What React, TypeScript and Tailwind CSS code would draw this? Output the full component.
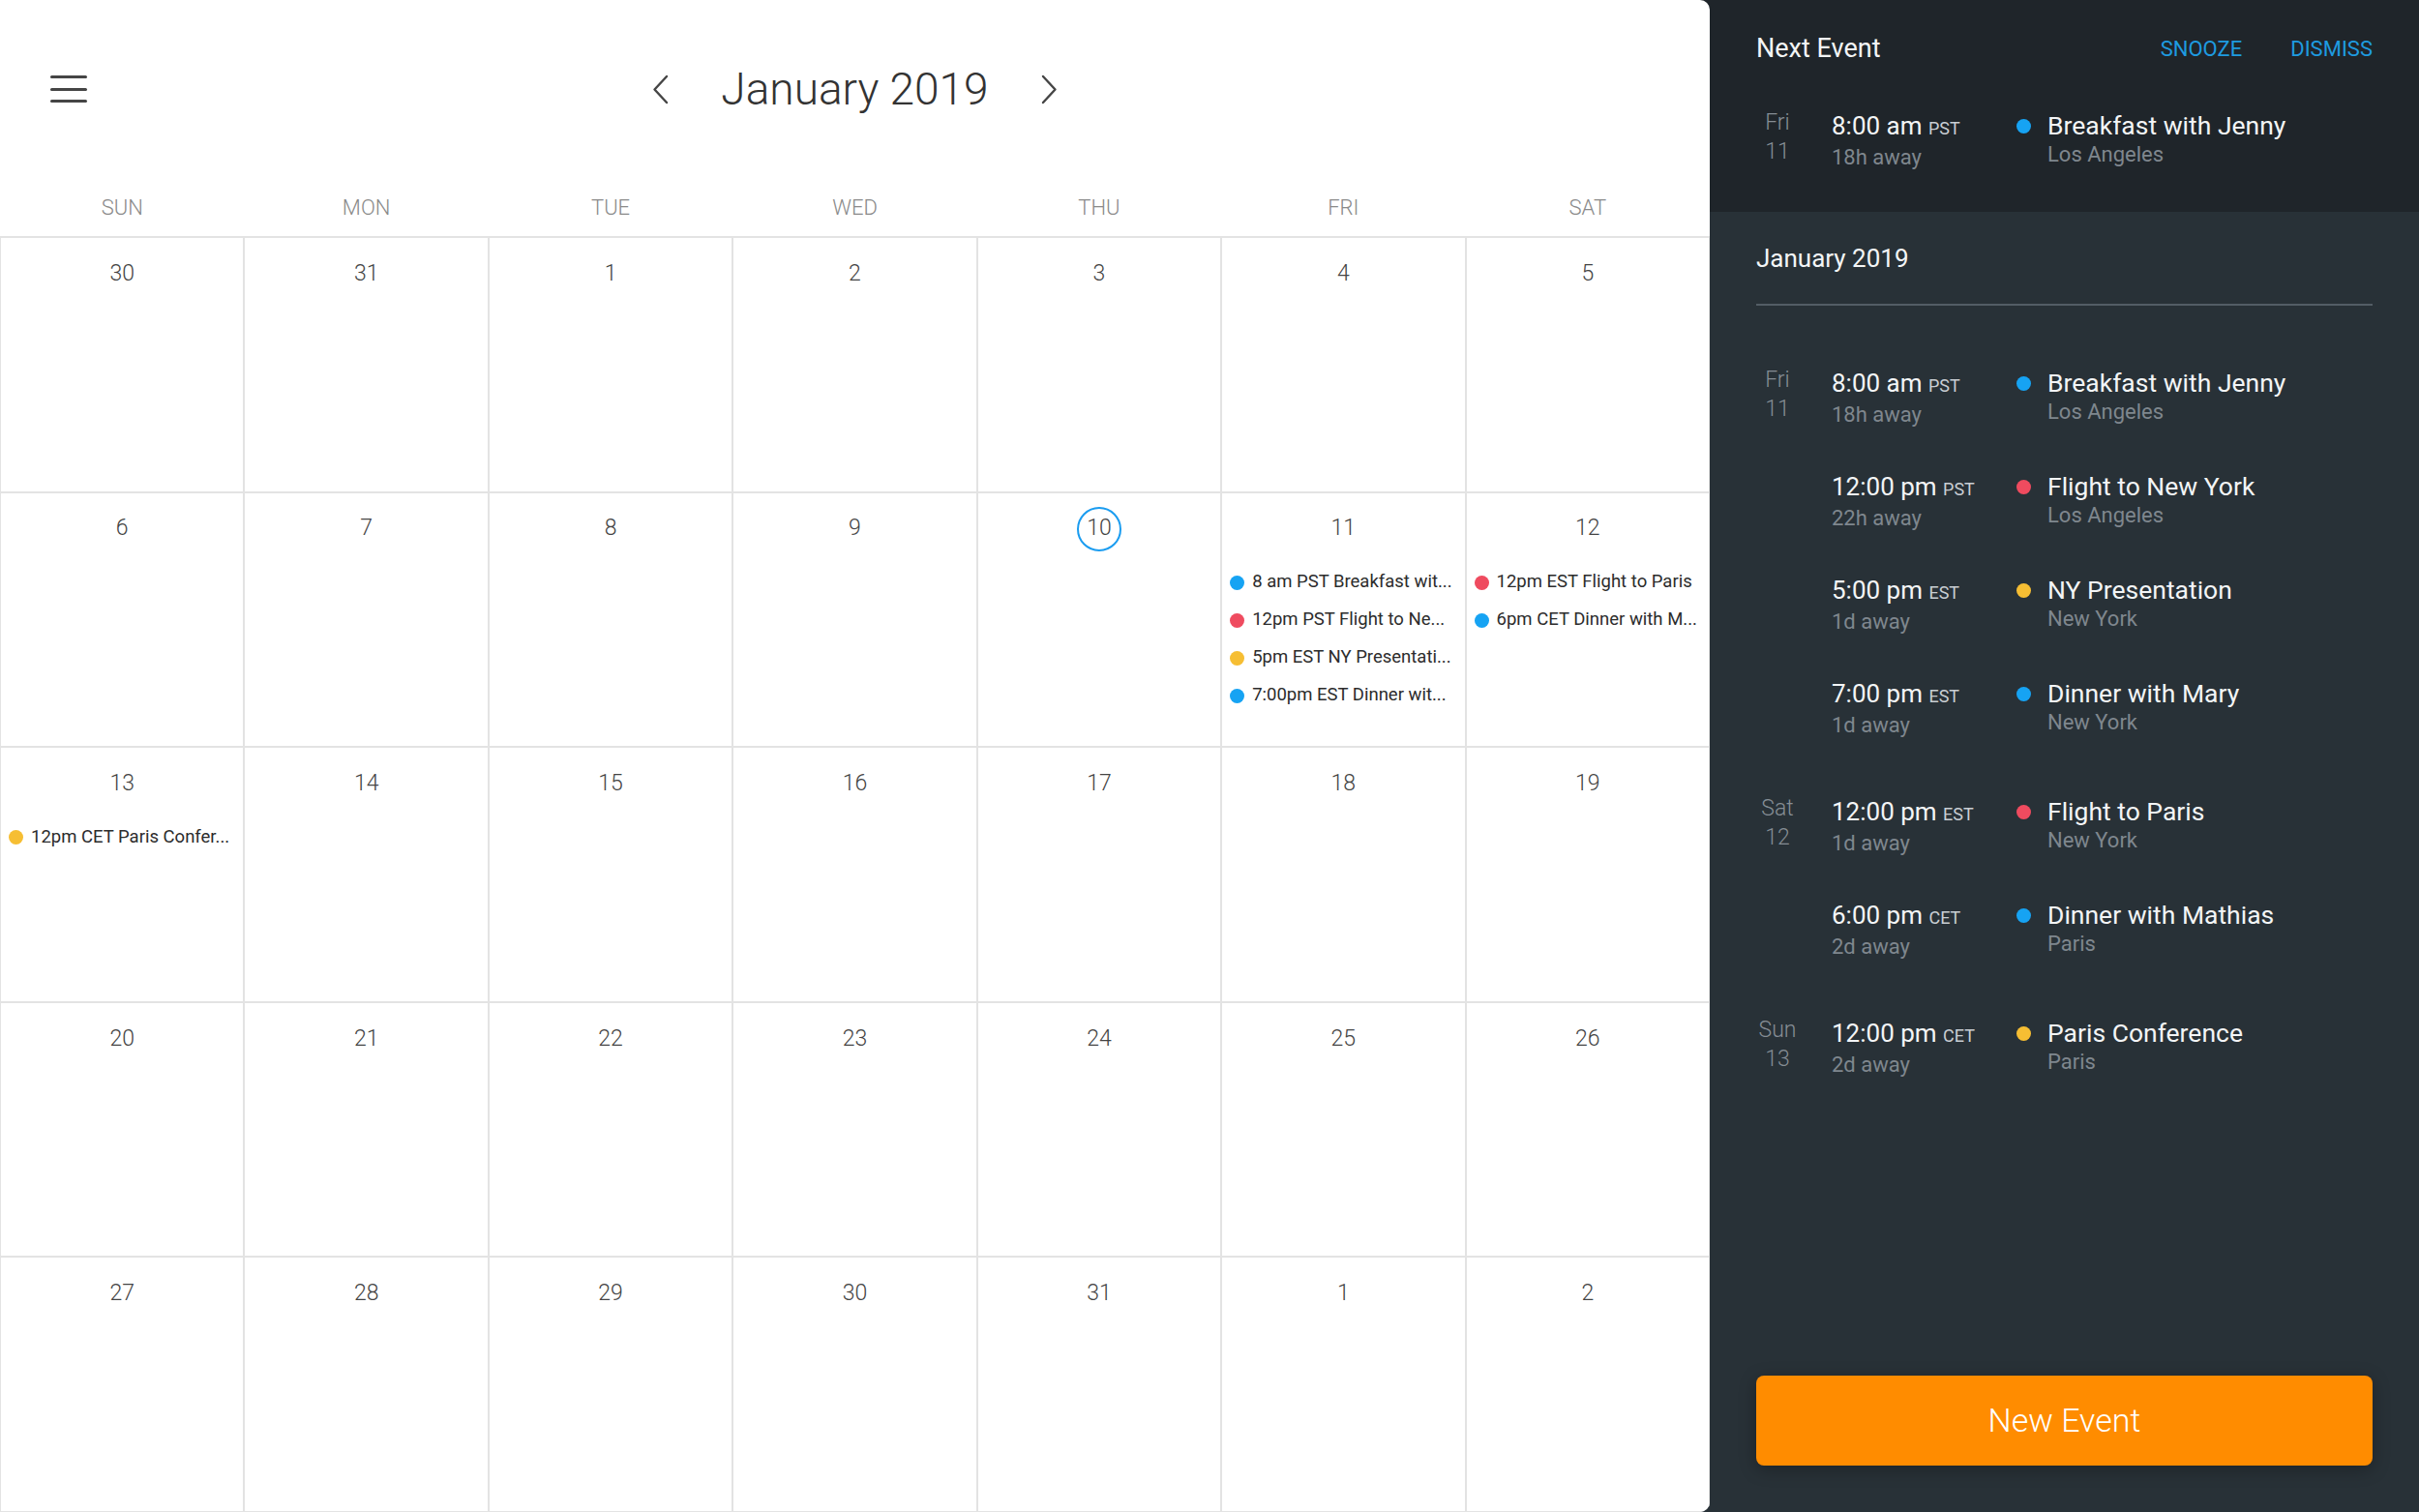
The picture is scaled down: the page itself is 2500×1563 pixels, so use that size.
import React from "react";

type Tone = "blue" | "red" | "yellow";

const dotClass: Record<Tone, string> = {
  blue: "bg-[#16a3f3]",
  red: "bg-[#ef4b5f]",
  yellow: "bg-[#f6be33]",
};

type CellEvent = { tone: Tone; text: string };
type Cell = { day: number; today?: boolean; events?: CellEvent[] };

const weekdays = ["SUN", "MON", "TUE", "WED", "THU", "FRI", "SAT"];

const cells: Cell[] = [
  { day: 30 }, { day: 31 }, { day: 1 }, { day: 2 }, { day: 3 }, { day: 4 }, { day: 5 },
  { day: 6 }, { day: 7 }, { day: 8 }, { day: 9 }, { day: 10, today: true },
  {
    day: 11,
    events: [
      { tone: "blue", text: "8 am PST Breakfast wit..." },
      { tone: "red", text: "12pm PST Flight to Ne..." },
      { tone: "yellow", text: "5pm EST NY Presentati..." },
      { tone: "blue", text: "7:00pm EST Dinner wit..." },
    ],
  },
  {
    day: 12,
    events: [
      { tone: "red", text: "12pm EST Flight to Paris" },
      { tone: "blue", text: "6pm CET Dinner with M..." },
    ],
  },
  { day: 13, events: [{ tone: "yellow", text: "12pm CET Paris Confer..." }] },
  { day: 14 }, { day: 15 }, { day: 16 }, { day: 17 }, { day: 18 }, { day: 19 },
  { day: 20 }, { day: 21 }, { day: 22 }, { day: 23 }, { day: 24 }, { day: 25 }, { day: 26 },
  { day: 27 }, { day: 28 }, { day: 29 }, { day: 30 }, { day: 31 }, { day: 1 }, { day: 2 },
];

type AgendaEvent = {
  time: string;
  tz: string;
  away: string;
  tone: Tone;
  title: string;
  place: string;
};

const agenda: { day: string; date: string; events: AgendaEvent[] }[] = [
  {
    day: "Fri",
    date: "11",
    events: [
      { time: "8:00 am", tz: "PST", away: "18h away", tone: "blue", title: "Breakfast with Jenny", place: "Los Angeles" },
      { time: "12:00 pm", tz: "PST", away: "22h away", tone: "red", title: "Flight to New York", place: "Los Angeles" },
      { time: "5:00 pm", tz: "EST", away: "1d away", tone: "yellow", title: "NY Presentation", place: "New York" },
      { time: "7:00 pm", tz: "EST", away: "1d away", tone: "blue", title: "Dinner with Mary", place: "New York" },
    ],
  },
  {
    day: "Sat",
    date: "12",
    events: [
      { time: "12:00 pm", tz: "EST", away: "1d away", tone: "red", title: "Flight to Paris", place: "New York" },
      { time: "6:00 pm", tz: "CET", away: "2d away", tone: "blue", title: "Dinner with Mathias", place: "Paris" },
    ],
  },
  {
    day: "Sun",
    date: "13",
    events: [
      { time: "12:00 pm", tz: "CET", away: "2d away", tone: "yellow", title: "Paris Conference", place: "Paris" },
    ],
  },
];

function Chevron({ dir }: { dir: "left" | "right" }) {
  return (
    <svg width="17" height="31" viewBox="0 0 17 31" fill="none">
      <polyline
        points={dir === "left" ? "15,2 2.5,15.5 15,29" : "2,2 14.5,15.5 2,29"}
        stroke="#454545"
        strokeWidth="2.4"
        strokeLinecap="round"
        strokeLinejoin="round"
      />
    </svg>
  );
}

function AgendaRow({ event, day, date }: { event: AgendaEvent; day?: string; date?: string }) {
  return (
    <div className="flex h-[58px]">
      <div className="-mt-[2px] w-[44px] text-center text-[23px] font-light leading-[30px] text-[#858d94]">
        {day ? (
          <>
            <div>{day}</div>
            <div>{date}</div>
          </>
        ) : null}
      </div>
      <div className="ml-[34px] w-[191px]">
        <div className="text-[26px] leading-[32px] text-[#f3f5f6]">
          {event.time} <span className="text-[18px] text-[#c9ced3]">{event.tz}</span>
        </div>
        <div className="text-[22px] leading-[27px] text-[#7f878e]">{event.away}</div>
      </div>
      <span className={`mt-[9px] h-[15px] w-[15px] shrink-0 rounded-full ${dotClass[event.tone]}`} />
      <div className="ml-[17px]">
        <div className="text-[26.5px] leading-[32px] text-[#f3f5f6]">{event.title}</div>
        <div className="text-[22px] leading-[27px] text-[#7f878e]">{event.place}</div>
      </div>
    </div>
  );
}

export default function App() {
  return (
    <div className="flex h-[1563px] w-[2500px] overflow-hidden bg-[#283137] font-[Roboto,'Noto_Sans',sans-serif]">
      <section className="relative z-10 flex w-[1767px] shrink-0 flex-col overflow-hidden rounded-r-[10px] bg-white">
        <header className="grid h-[184px] grid-cols-[1fr_auto_1fr] items-center">
          <button type="button" className="ml-[52px] flex w-[38px] flex-col gap-[9.5px]">
            <span className="h-[3px] w-[38px] rounded-full bg-[#454545]" />
            <span className="h-[3px] w-[38px] rounded-full bg-[#454545]" />
            <span className="h-[3px] w-[38px] rounded-full bg-[#454545]" />
          </button>
          <div className="flex items-center gap-[54px]">
            <Chevron dir="left" />
            <h1 className="text-[46px] font-light leading-none text-[#333333]">January 2019</h1>
            <Chevron dir="right" />
          </div>
          <div />
        </header>

        <div className="grid h-[60px] grid-cols-7 items-center">
          {weekdays.map((d) => (
            <div key={d} className="text-center text-[22px] font-light text-[#8a8a8a]">
              {d}
            </div>
          ))}
        </div>

        <div className="grid flex-1 grid-cols-7 grid-rows-5 border-t border-[#e3e3e3]">
          {cells.map((cell, i) => (
            <div key={i} className="flex min-w-0 flex-col border border-[#e3e3e3] pt-[24px]">
              <div className="flex h-[26px] items-center justify-center text-[23px] font-light text-[#444444]">
                {cell.today ? (
                  <span className="flex h-[46px] w-[46px] items-center justify-center rounded-full border-2 border-[#1a9cf0]">
                    {cell.day}
                  </span>
                ) : (
                  cell.day
                )}
              </div>
              {cell.events ? (
                <div className="mt-[23px] flex flex-col">
                  {cell.events.map((ev, j) => (
                    <div key={j} className="flex h-[39px] items-center pl-[8px] pr-[8px]">
                      <span className={`h-[15px] w-[15px] shrink-0 rounded-full ${dotClass[ev.tone]}`} />
                      <span className="ml-[8px] truncate text-[18.5px] text-[#2c2c2c]">{ev.text}</span>
                    </div>
                  ))}
                </div>
              ) : null}
            </div>
          ))}
        </div>
      </section>

      <aside className="-ml-[10px] flex flex-1 flex-col">
        <div className="bg-[#1f252a] pb-[47px] pl-[58px] pr-[48px] pt-[34px]">
          <div className="flex h-[32px] items-center justify-between">
            <span className="text-[27px] text-[#f3f5f6]">Next Event</span>
            <div className="flex gap-[50px] text-[22px] text-[#1e9be0]">
              <button type="button">SNOOZE</button>
              <button type="button">DISMISS</button>
            </div>
          </div>
          <div className="mt-[48px]">
            <AgendaRow event={agenda[0].events[0]} day="Fri" date="11" />
          </div>
        </div>

        <div className="flex flex-1 flex-col pb-[48px] pl-[58px] pr-[48px] pt-[32px]">
          <div className="text-[26px] leading-[32px] text-[#f3f5f6]">January 2019</div>
          <div className="mt-[31px] h-[2px] bg-[#535d65]" />
          <div className="mt-[64px] flex flex-col gap-[64px]">
            {agenda.map((group) => (
              <div key={group.date} className="flex flex-col gap-[49px]">
                {group.events.map((ev, k) => (
                  <AgendaRow
                    key={ev.title}
                    event={ev}
                    day={k === 0 ? group.day : undefined}
                    date={k === 0 ? group.date : undefined}
                  />
                ))}
              </div>
            ))}
          </div>
          <button
            type="button"
            className="mt-auto h-[93px] w-full rounded-[8px] bg-[#ff8c00] text-[34px] font-light text-white shadow-[0_4px_18px_rgba(0,0,0,0.28)]"
          >
            New Event
          </button>
        </div>
      </aside>
    </div>
  );
}
